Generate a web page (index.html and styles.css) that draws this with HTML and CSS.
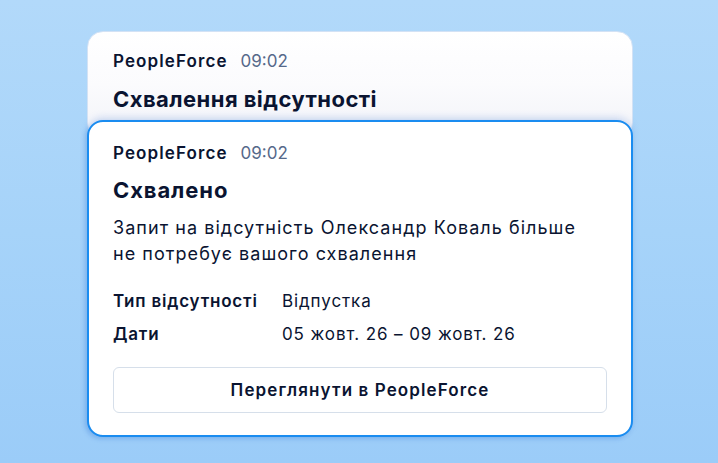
FILE: index.html
```html
<!DOCTYPE html>
<html lang="uk">
<head>
<meta charset="utf-8">
<title>PeopleForce</title>
<link rel="stylesheet" href="styles.css">
</head>
<body>
<main class="stack">
  <section class="card card-back">
    <div class="meta"><span class="app">PeopleForce</span><span class="time">09:02</span></div>
    <h2 class="title">Схвалення відсутності</h2>
  </section>
  <section class="card card-front">
    <div class="meta"><span class="app">PeopleForce</span><span class="time">09:02</span></div>
    <h2 class="title">Схвалено</h2>
    <p class="body">Запит на відсутність Олександр Коваль більше не потребує вашого схвалення</p>
    <dl class="details">
      <dt>Тип відсутності</dt><dd>Відпустка</dd>
      <dt>Дати</dt><dd>05 жовт. 26 – 09 жовт. 26</dd>
    </dl>
    <button class="btn" type="button">Переглянути в PeopleForce</button>
  </section>
</main>
</body>
</html>
```
FILE: styles.css
```css
* { box-sizing: border-box; }
html, body { margin: 0; padding: 0; }
body {
  width: 718px;
  height: 463px;
  overflow: hidden;
  background: linear-gradient(180deg, #b2d9fa 0%, #a6d3f9 50%, #9bccf8 100%);
  font-family: Inter, "Noto Sans", sans-serif;
  color: #0a1431;
}
.stack {
  width: 546px;
  margin: 31px auto 0 87px;
  display: flex;
  flex-direction: column;
}
.card {
  border-radius: 16px;
  background: #fff;
}
.card-back {
  border: 1px solid #d3e2f5;
  background: linear-gradient(180deg, #ffffff 0%, #fbfbfd 50%, #f2f3f8 100%);
  padding: 17px 25px 25px;
}
.card-front {
  position: relative;
  margin-top: -19px;
  border: 2px solid #1a8cf0;
  padding: 19px 24px 22px;
  box-shadow: 0 -3px 7px rgba(80, 130, 220, 0.22), -2px 2px 4px rgba(40, 110, 210, 0.25);
}
.meta {
  display: flex;
  align-items: baseline;
  gap: 13px;
  height: 24px;
  line-height: 24px;
}
.app {
  font-size: 17px;
  font-weight: 600;
  letter-spacing: 1.1px;
}
.time {
  font-size: 17px;
  font-weight: 400;
  color: #56698a;
}
.title {
  margin: 12px 0 0;
  font-size: 22px;
  line-height: 28px;
  font-weight: 700;
  letter-spacing: 0.45px;
}
.card-front .title { margin-top: 11px; letter-spacing: 0.9px; }
.body {
  margin: 11px 0 0;
  font-size: 18px;
  line-height: 26px;
  font-weight: 400;
  letter-spacing: 1.05px;
  max-width: 490px;
}
.details {
  margin: 22px 0 0;
  display: grid;
  grid-template-columns: 169px 1fr;
  row-gap: 8px;
  font-size: 17px;
  line-height: 25px;
}
.details dt { font-weight: 600; letter-spacing: 0.8px; }
.details dd { margin: 0; font-weight: 400; letter-spacing: 0.9px; }
.btn {
  margin-top: 20px;
  width: 100%;
  height: 46px;
  border: 1.5px solid #d6dfea;
  border-radius: 6px;
  background: #fff;
  font-family: Inter, "Noto Sans", sans-serif;
  font-size: 17px;
  font-weight: 600;
  letter-spacing: 1.1px;
  color: #0a1431;
}
```
